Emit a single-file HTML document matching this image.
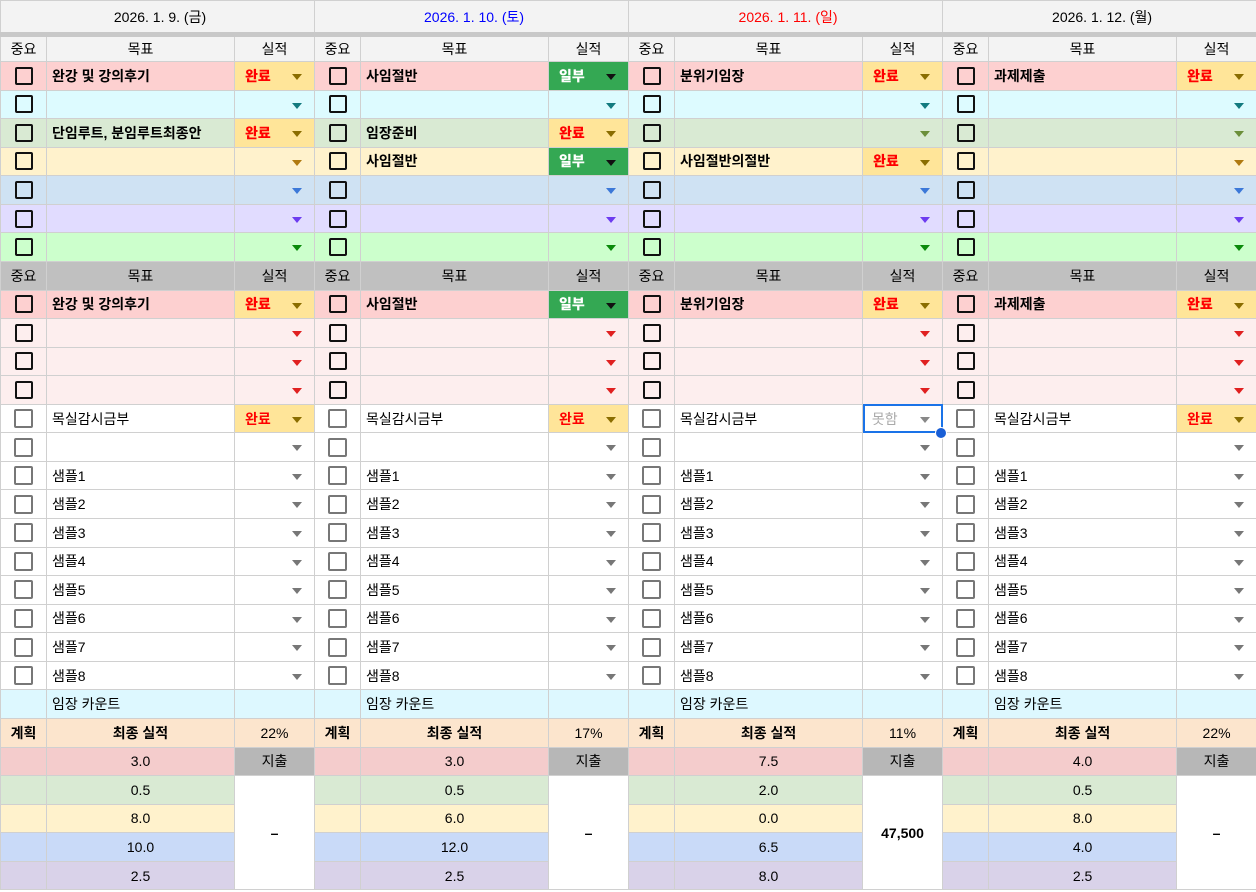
<!DOCTYPE html>
<html><head><meta charset="utf-8">
<style>
*{box-sizing:border-box}
body{margin:0;background:#fff;font-family:"Liberation Sans","Noto Sans CJK KR",sans-serif;font-size:14px;color:#000}
table{border-collapse:collapse;table-layout:fixed;width:1256px}
td{border:1px solid #d0d0d0;padding:0 0 0 5px;height:28.57px;white-space:nowrap;overflow:hidden;position:relative}
tr.d td{height:34px;background:#f3f3f3;text-align:center;border-bottom:5px solid #c8c8c8;font-size:14px}
tr.h td{height:27px;background:#f3f3f3;text-align:center;padding:0}
tr.h2 td{height:28.57px;background:#c0c0c0;text-align:center;padding:0}
td.x{padding:0}
s{display:block;width:18px;height:18px;border:2px solid #111;border-radius:2px;margin:0 auto}
tr.w s{border:2px solid #777;width:19px;height:19px}
i{position:absolute;right:12px;top:12px;width:0;height:0;border-left:5px solid transparent;border-right:5px solid transparent;border-top:6px solid #666}
b.k{color:#f00;padding-left:5px}
b.u{color:#fff;padding-left:5px}
td.ok{background:#ffe599!important}td.ok i{border-top-color:#8a6d00!important}
td.ip{background:#34a853!important}td.ip i{border-top-color:#111!important}
td.no{background:#d9d9d9;outline:2px solid #1a73e8;outline-offset:-2px;color:#aaa}td.no i{border-top-color:#888}
.p td{background:#fdd0d0;font-weight:bold}.p i{border-top-color:#8a6d00}
.c td{background:#ddfbff}.c i{border-top-color:#137a7f}
.g td{background:#d9ead3;font-weight:bold}.g i{border-top-color:#6b8f3a}
.y td{background:#fff2cc;font-weight:bold}.y i{border-top-color:#b07a10}
.b td{background:#cfe2f3}.b i{border-top-color:#3c78d8}
.v td{background:#e1dcff}.v i{border-top-color:#6d3cf0}
.l td{background:#ccffcc}.l i{border-top-color:#0a8a0a}
.lp td{background:#fdeeee}.lp i{border-top-color:#e02020}
.w td{background:#fff}.w i{border-top-color:#777}
.cy td{background:#ddf8ff}
.pe td{background:#fce5cd;text-align:center;padding:0}
.r1 td{background:#f4cccc;text-align:center;padding:0}
.r2 td{background:#d9ead3;text-align:center;padding:0}
.r3 td{background:#fff2cc;text-align:center;padding:0}
.r4 td{background:#c9daf8;text-align:center;padding:0}
.r5 td{background:#d9d2e9;text-align:center;padding:0}
td.gx{background:#b7b7b7!important}
td.m{background:#fff!important;font-weight:bold}
</style></head><body>
<table>
<colgroup><col style="width:46px"><col style="width:188px"><col style="width:80px"><col style="width:46px"><col style="width:188px"><col style="width:80px"><col style="width:46px"><col style="width:188px"><col style="width:80px"><col style="width:46px"><col style="width:188px"><col style="width:80px"></colgroup>
<tr class="d"><td colspan="3">2026. 1. 9. (금)</td><td colspan="3" style="color:#0000ff">2026. 1. 10. (토)</td><td colspan="3" style="color:#ff0000">2026. 1. 11. (일)</td><td colspan="3">2026. 1. 12. (월)</td></tr>
<tr class="h"><td>중요</td><td>목표</td><td>실적</td><td>중요</td><td>목표</td><td>실적</td><td>중요</td><td>목표</td><td>실적</td><td>중요</td><td>목표</td><td>실적</td></tr>
<tr class="p"><td class="x"><s></s></td><td>완강 및 강의후기</td><td class="ok"><b class="k">완료</b><i></i></td><td class="x"><s></s></td><td>사임절반</td><td class="ip"><b class="u">일부</b><i></i></td><td class="x"><s></s></td><td>분위기임장</td><td class="ok"><b class="k">완료</b><i></i></td><td class="x"><s></s></td><td>과제제출</td><td class="ok"><b class="k">완료</b><i></i></td></tr>
<tr class="c"><td class="x"><s></s></td><td></td><td><i></i></td><td class="x"><s></s></td><td></td><td><i></i></td><td class="x"><s></s></td><td></td><td><i></i></td><td class="x"><s></s></td><td></td><td><i></i></td></tr>
<tr class="g"><td class="x"><s></s></td><td>단임루트, 분임루트최종안</td><td class="ok"><b class="k">완료</b><i></i></td><td class="x"><s></s></td><td>임장준비</td><td class="ok"><b class="k">완료</b><i></i></td><td class="x"><s></s></td><td></td><td><i></i></td><td class="x"><s></s></td><td></td><td><i></i></td></tr>
<tr class="y"><td class="x"><s></s></td><td></td><td><i></i></td><td class="x"><s></s></td><td>사임절반</td><td class="ip"><b class="u">일부</b><i></i></td><td class="x"><s></s></td><td>사임절반의절반</td><td class="ok"><b class="k">완료</b><i></i></td><td class="x"><s></s></td><td></td><td><i></i></td></tr>
<tr class="b"><td class="x"><s></s></td><td></td><td><i></i></td><td class="x"><s></s></td><td></td><td><i></i></td><td class="x"><s></s></td><td></td><td><i></i></td><td class="x"><s></s></td><td></td><td><i></i></td></tr>
<tr class="v"><td class="x"><s></s></td><td></td><td><i></i></td><td class="x"><s></s></td><td></td><td><i></i></td><td class="x"><s></s></td><td></td><td><i></i></td><td class="x"><s></s></td><td></td><td><i></i></td></tr>
<tr class="l"><td class="x"><s></s></td><td></td><td><i></i></td><td class="x"><s></s></td><td></td><td><i></i></td><td class="x"><s></s></td><td></td><td><i></i></td><td class="x"><s></s></td><td></td><td><i></i></td></tr>
<tr class="h h2"><td>중요</td><td>목표</td><td>실적</td><td>중요</td><td>목표</td><td>실적</td><td>중요</td><td>목표</td><td>실적</td><td>중요</td><td>목표</td><td>실적</td></tr>
<tr class="p"><td class="x"><s></s></td><td>완강 및 강의후기</td><td class="ok"><b class="k">완료</b><i></i></td><td class="x"><s></s></td><td>사임절반</td><td class="ip"><b class="u">일부</b><i></i></td><td class="x"><s></s></td><td>분위기임장</td><td class="ok"><b class="k">완료</b><i></i></td><td class="x"><s></s></td><td>과제제출</td><td class="ok"><b class="k">완료</b><i></i></td></tr>
<tr class="lp"><td class="x"><s></s></td><td></td><td><i></i></td><td class="x"><s></s></td><td></td><td><i></i></td><td class="x"><s></s></td><td></td><td><i></i></td><td class="x"><s></s></td><td></td><td><i></i></td></tr>
<tr class="lp"><td class="x"><s></s></td><td></td><td><i></i></td><td class="x"><s></s></td><td></td><td><i></i></td><td class="x"><s></s></td><td></td><td><i></i></td><td class="x"><s></s></td><td></td><td><i></i></td></tr>
<tr class="lp"><td class="x"><s></s></td><td></td><td><i></i></td><td class="x"><s></s></td><td></td><td><i></i></td><td class="x"><s></s></td><td></td><td><i></i></td><td class="x"><s></s></td><td></td><td><i></i></td></tr>
<tr class="w"><td class="x"><s></s></td><td>목실감시금부</td><td class="ok"><b class="k">완료</b><i></i></td><td class="x"><s></s></td><td>목실감시금부</td><td class="ok"><b class="k">완료</b><i></i></td><td class="x"><s></s></td><td>목실감시금부</td><td class="no">&nbsp;못함<i></i></td><td class="x"><s></s></td><td>목실감시금부</td><td class="ok"><b class="k">완료</b><i></i></td></tr>
<tr class="w"><td class="x"><s></s></td><td></td><td><i></i></td><td class="x"><s></s></td><td></td><td><i></i></td><td class="x"><s></s></td><td></td><td><i></i></td><td class="x"><s></s></td><td></td><td><i></i></td></tr>
<tr class="w"><td class="x"><s></s></td><td>샘플1</td><td><i></i></td><td class="x"><s></s></td><td>샘플1</td><td><i></i></td><td class="x"><s></s></td><td>샘플1</td><td><i></i></td><td class="x"><s></s></td><td>샘플1</td><td><i></i></td></tr>
<tr class="w"><td class="x"><s></s></td><td>샘플2</td><td><i></i></td><td class="x"><s></s></td><td>샘플2</td><td><i></i></td><td class="x"><s></s></td><td>샘플2</td><td><i></i></td><td class="x"><s></s></td><td>샘플2</td><td><i></i></td></tr>
<tr class="w"><td class="x"><s></s></td><td>샘플3</td><td><i></i></td><td class="x"><s></s></td><td>샘플3</td><td><i></i></td><td class="x"><s></s></td><td>샘플3</td><td><i></i></td><td class="x"><s></s></td><td>샘플3</td><td><i></i></td></tr>
<tr class="w"><td class="x"><s></s></td><td>샘플4</td><td><i></i></td><td class="x"><s></s></td><td>샘플4</td><td><i></i></td><td class="x"><s></s></td><td>샘플4</td><td><i></i></td><td class="x"><s></s></td><td>샘플4</td><td><i></i></td></tr>
<tr class="w"><td class="x"><s></s></td><td>샘플5</td><td><i></i></td><td class="x"><s></s></td><td>샘플5</td><td><i></i></td><td class="x"><s></s></td><td>샘플5</td><td><i></i></td><td class="x"><s></s></td><td>샘플5</td><td><i></i></td></tr>
<tr class="w"><td class="x"><s></s></td><td>샘플6</td><td><i></i></td><td class="x"><s></s></td><td>샘플6</td><td><i></i></td><td class="x"><s></s></td><td>샘플6</td><td><i></i></td><td class="x"><s></s></td><td>샘플6</td><td><i></i></td></tr>
<tr class="w"><td class="x"><s></s></td><td>샘플7</td><td><i></i></td><td class="x"><s></s></td><td>샘플7</td><td><i></i></td><td class="x"><s></s></td><td>샘플7</td><td><i></i></td><td class="x"><s></s></td><td>샘플7</td><td><i></i></td></tr>
<tr class="w"><td class="x"><s></s></td><td>샘플8</td><td><i></i></td><td class="x"><s></s></td><td>샘플8</td><td><i></i></td><td class="x"><s></s></td><td>샘플8</td><td><i></i></td><td class="x"><s></s></td><td>샘플8</td><td><i></i></td></tr>
<tr class="cy"><td></td><td>임장 카운트</td><td></td><td></td><td>임장 카운트</td><td></td><td></td><td>임장 카운트</td><td></td><td></td><td>임장 카운트</td><td></td></tr>
<tr class="pe"><td><b>계획</b></td><td><b>최종 실적</b></td><td>22%</td><td><b>계획</b></td><td><b>최종 실적</b></td><td>17%</td><td><b>계획</b></td><td><b>최종 실적</b></td><td>11%</td><td><b>계획</b></td><td><b>최종 실적</b></td><td>22%</td></tr>
<tr class="r1"><td></td><td>3.0</td><td class="gx">지출</td><td></td><td>3.0</td><td class="gx">지출</td><td></td><td>7.5</td><td class="gx">지출</td><td></td><td>4.0</td><td class="gx">지출</td></tr>
<tr class="r2"><td></td><td>0.5</td><td class="m" rowspan="4">–</td><td></td><td>0.5</td><td class="m" rowspan="4">–</td><td></td><td>2.0</td><td class="m" rowspan="4">47,500</td><td></td><td>0.5</td><td class="m" rowspan="4">–</td></tr>
<tr class="r3"><td></td><td>8.0</td><td></td><td>6.0</td><td></td><td>0.0</td><td></td><td>8.0</td></tr>
<tr class="r4"><td></td><td>10.0</td><td></td><td>12.0</td><td></td><td>6.5</td><td></td><td>4.0</td></tr>
<tr class="r5"><td></td><td>2.5</td><td></td><td>2.5</td><td></td><td>8.0</td><td></td><td>2.5</td></tr>
</table>
<div style="position:absolute;left:935px;top:427px;width:12px;height:12px;border-radius:50%;background:#1a5fd6;border:1px solid #fff"></div>
</body></html>
